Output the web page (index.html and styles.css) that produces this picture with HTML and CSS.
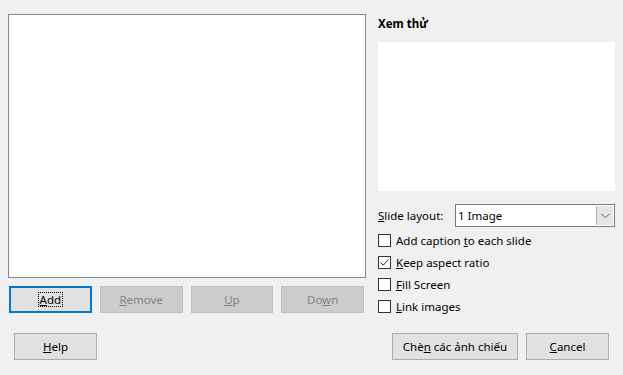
FILE: index.html
```html
<!DOCTYPE html>
<html>
<head>
<meta charset="utf-8">
<link rel="stylesheet" href="styles.css">
</head>
<body>
<div class="dialog">
  <div class="main">
    <div class="left">
      <div class="list"></div>
      <div class="btnrow">
        <button class="btn focus"><span class="focusring"><u>A</u>dd</span></button>
        <button class="btn disabled"><span><u>R</u>emove</span></button>
        <button class="btn disabled"><span><u>U</u>p</span></button>
        <button class="btn disabled"><span>Do<u>w</u>n</span></button>
      </div>
    </div>
    <div class="right">
      <div class="title">Xem thử</div>
      <div class="preview"></div>
      <div class="layoutrow">
        <span class="label"><u>S</u>lide layout:</span>
        <div class="select">
          <span class="value">1 Image</span>
          <span class="arrow"><svg width="9" height="6" viewBox="0 0 9 6"><path d="M0.5 0.8 L4.5 4.8 L8.5 0.8" fill="none" stroke="#606060" stroke-width="1"/></svg></span>
        </div>
      </div>
      <div class="checks">
        <div class="check"><span class="box"></span><span>Add caption <u>t</u>o each slide</span></div>
        <div class="check"><span class="box"><svg width="11" height="11" viewBox="0 0 11 11"><path d="M1.5 5.5 L4.2 8.2 L9.5 2.5" fill="none" stroke="#333" stroke-width="1"/></svg></span><span><u>K</u>eep aspect ratio</span></div>
        <div class="check"><span class="box"></span><span><u>F</u>ill Screen</span></div>
        <div class="check"><span class="box"></span><span><u>L</u>ink images</span></div>
      </div>
    </div>
  </div>
  <div class="bottom">
    <button class="btn help"><span><u>H</u>elp</span></button>
    <div class="spacer"></div>
    <button class="btn insert"><span>Chè<u>n</u> các ảnh chiếu</span></button>
    <button class="btn cancel"><span><u>C</u>ancel</span></button>
  </div>
</div>
</body>
</html>
```
FILE: styles.css
```css
html, body {
  margin: 0;
  padding: 0;
  background: #f0f0f0;
  width: 623px;
  height: 375px;
  overflow: hidden;
}
body {
  font-family: "Noto Sans", "Open Sans", sans-serif;
  font-size: 11.5px;
  color: #000;
}
.dialog {
  display: flex;
  flex-direction: column;
  padding: 14px 0 0 8px;
}
.main {
  display: flex;
}
.left {
  width: 358px;
  display: flex;
  flex-direction: column;
}
.list {
  height: 262px;
  background: #fff;
  border: 1px solid #828790;
}
.btnrow {
  display: grid;
  grid-template-columns: repeat(4, 1fr);
  column-gap: 8px;
  margin: 8px 2px 0 1px;
}
.btn {
  font-family: inherit;
  font-size: 11.5px;
  height: 27px;
  background: #e1e1e1;
  border: 1px solid #adadad;
  color: #000;
  padding: 0;
  margin: 0;
  display: flex;
  align-items: center;
  justify-content: center;
  white-space: nowrap;
}
.btn.focus {
  border: 2px solid #0078d7;
}
.focusring {
  outline: 1px dotted #000;
  padding: 0 1px;
  line-height: 13px;
}
.btn.disabled {
  background: #cccccc;
  border-color: #bfbfbf;
  color: #838383;
}
.right {
  margin-left: 12px;
  width: 237px;
  display: flex;
  flex-direction: column;
}
.title {
  font-weight: bold;
  height: 14px;
  line-height: 14px;
  margin-top: 3px;
}
.preview {
  margin-top: 11px;
  height: 149px;
  background: #fff;
}
.layoutrow {
  margin-top: 13px;
  display: flex;
  align-items: center;
  height: 23px;
}
.label {
  width: 77px;
}
.select {
  flex: 1;
  height: 23px;
  box-sizing: border-box;
  border: 1px solid #7a7a7a;
  background: #fff;
  display: flex;
  align-items: center;
}
.select .value {
  flex: 1;
  padding-left: 2px;
}
.arrow {
  width: 16px;
  height: 19px;
  margin-right: 1px;
  background: #e5e5e5;
  border-left: 1px solid #b0b0b0;
  display: flex;
  align-items: center;
  justify-content: center;
}
.checks {
  display: flex;
  flex-direction: column;
  margin-top: 2px;
}
.check {
  height: 22px;
  display: flex;
  align-items: center;
}
.box {
  width: 11px;
  height: 11px;
  border: 1px solid #333;
  background: #fff;
  margin-right: 5px;
  display: flex;
}
.bottom {
  display: flex;
  margin-top: 16px;
  padding-left: 6px;
}
.help {
  width: 83px;
}
.spacer {
  flex: 1;
}
.insert {
  width: 126px;
}
.cancel {
  width: 83px;
  margin-left: 8px;
  margin-right: 14px;
}
```
